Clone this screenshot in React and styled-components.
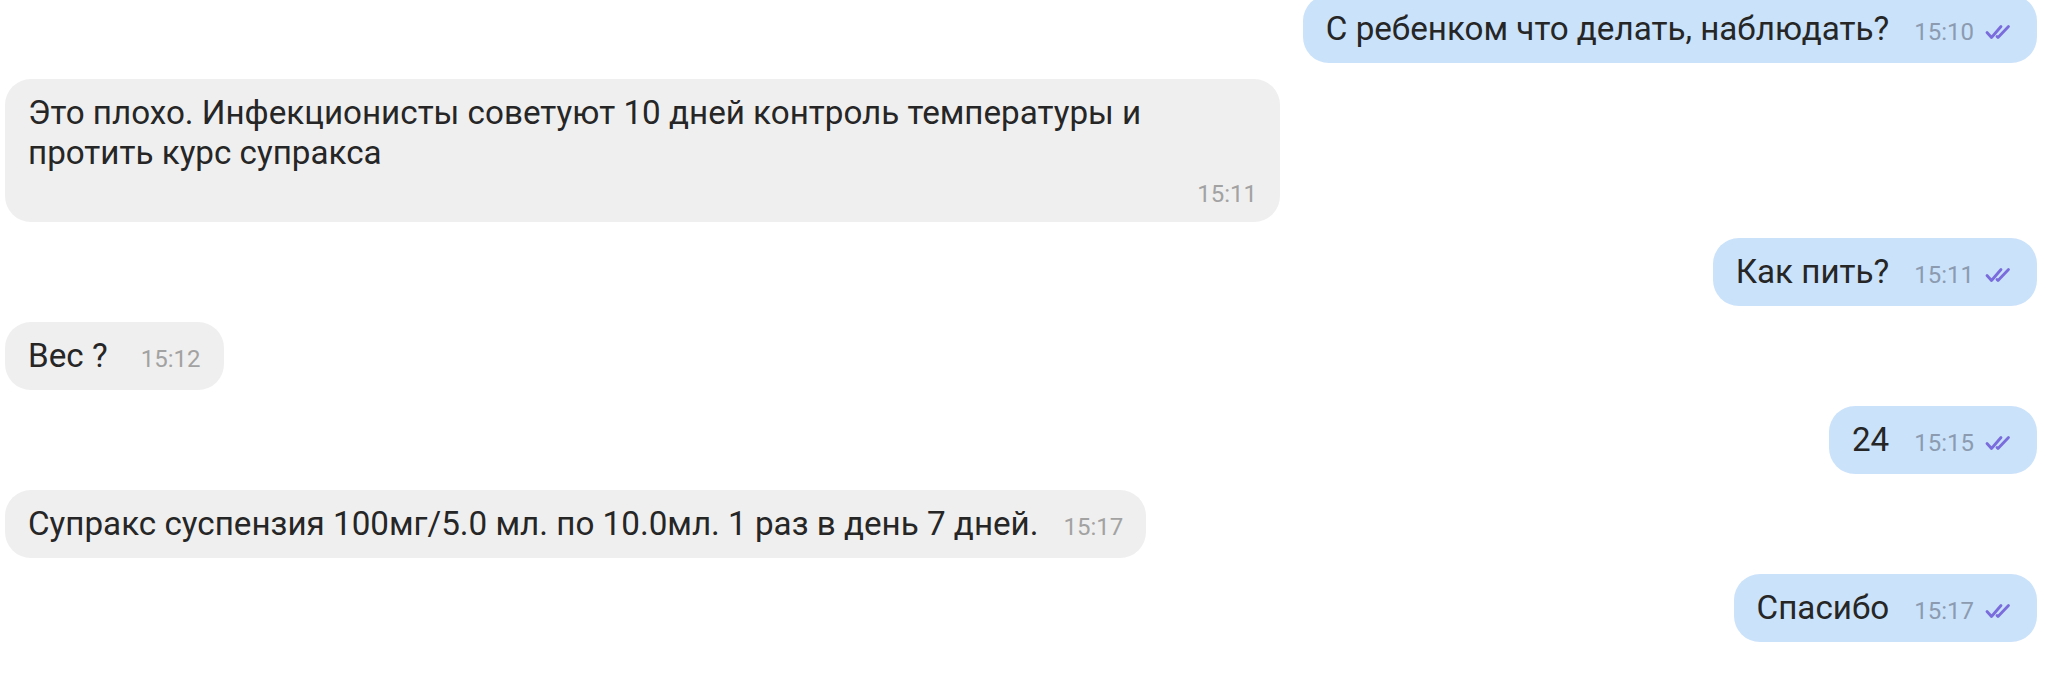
import React from 'react';
import styled, { createGlobalStyle } from 'styled-components';

const GlobalStyle = createGlobalStyle`
  html, body {
    margin: 0;
    padding: 0;
    background: #ffffff;
    overflow: hidden;
  }
  body {
    font-family: Roboto, "Noto Sans", "Liberation Sans", sans-serif;
  }
`;

const messages = [
  { id: 1, out: true, text: 'С ребенком что делать, наблюдать?', time: '15:10' },
  {
    id: 2,
    out: false,
    wide: true,
    text: 'Это плохо. Инфекционисты советуют 10 дней контроль температуры и\nпротить курс супракса',
    time: '15:11',
  },
  { id: 3, out: true, text: 'Как пить?', time: '15:11' },
  { id: 4, out: false, text: 'Вес ?\u00a0', time: '15:12' },
  { id: 5, out: true, text: '24', time: '15:15' },
  {
    id: 6,
    out: false,
    text: 'Супракс суспензия 100мг/5.0 мл. по 10.0мл. 1 раз в день 7 дней.',
    time: '15:17',
  },
  { id: 7, out: true, text: 'Спасибо', time: '15:17' },
];

const Feed = styled.div`
  display: flex;
  flex-direction: column;
  gap: 16px;
  margin-top: -5px;
  padding: 0 11px 0 5px;
`;

const Row = styled.div`
  display: flex;
  justify-content: ${(p) => (p.$out ? 'flex-end' : 'flex-start')};
`;

const Bubble = styled.div`
  display: flex;
  flex-direction: ${(p) => (p.$wide ? 'column' : 'row')};
  align-items: ${(p) => (p.$wide ? 'stretch' : 'baseline')};
  gap: 25px;
  box-sizing: border-box;
  width: ${(p) => (p.$wide ? '1275px' : 'auto')};
  padding: 14px 23px ${(p) => (p.$wide ? '13px' : '14px')};
  border-radius: 26px;
  background: ${(p) => (p.$out ? '#cae2fa' : '#efefef')};
  color: #262626;
`;

const Text = styled.div`
  font-size: 33.2px;
  line-height: 40px;
  white-space: pre-line;
`;

const Meta = styled.div`
  display: flex;
  align-items: center;
  justify-content: flex-end;
  gap: 11px;
  margin-top: ${(p) => (p.$wide ? '-19px' : '0')};
  align-self: ${(p) => (p.$wide ? 'flex-end' : 'auto')};
`;

const Time = styled.span`
  font-size: 24px;
  line-height: 30px;
  color: ${(p) => (p.$out ? '#8c9bb0' : '#a2a2a2')};
`;

const Ticks = () => (
  <svg width="29" height="16" viewBox="0 0 29 16" fill="none">
    <path d="M2 8.5 L6.5 13.5 L16 2.5" stroke="#7a6cdc" strokeWidth="2.8" strokeLinecap="round" strokeLinejoin="round" />
    <path d="M12 12.5 L13 13.5 L23.5 2.5" stroke="#7a6cdc" strokeWidth="2.8" strokeLinecap="round" strokeLinejoin="round" />
  </svg>
);

const Message = ({ msg }) => (
  <Row $out={msg.out}>
    <Bubble $out={msg.out} $wide={msg.wide}>
      <Text>{msg.text}</Text>
      <Meta $wide={msg.wide}>
        <Time $out={msg.out}>{msg.time}</Time>
        {msg.out && <Ticks />}
      </Meta>
    </Bubble>
  </Row>
);

export default function App() {
  return (
    <>
      <GlobalStyle />
      <Feed>
        {messages.map((m) => (
          <Message key={m.id} msg={m} />
        ))}
      </Feed>
    </>
  );
}
